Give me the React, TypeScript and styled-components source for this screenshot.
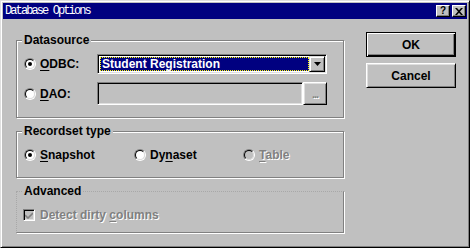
import React from 'react';
import styled, { createGlobalStyle } from 'styled-components';

const Global = createGlobalStyle`
  html, body { margin: 0; padding: 0; background: #c0c0c0; }
  * { box-sizing: border-box; }
`;

const Window = styled.div`
  width: 470px;
  height: 248px;
  background: #c0c0c0;
  border: 1px solid;
  border-color: #dfdfdf #000 #000 #dfdfdf;
  box-shadow: inset 1px 1px #fff, inset -1px -1px #808080;
  padding: 2px;
  display: flex;
  flex-direction: column;
  font-family: "Liberation Sans", Arial, sans-serif;
  font-size: 12px;
  font-weight: 700;
  color: #000;
`;

const TitleBar = styled.div`
  height: 16px;
  background: #000080;
  display: flex;
  align-items: center;
  padding: 0 1px 0 2px;
`;

const Title = styled.div`
  flex: 1;
  color: #fff;
  font-family: "Liberation Mono", "DejaVu Sans Mono", monospace;
  font-size: 12px;
  font-weight: 400;
  letter-spacing: -1.9px;
  line-height: 16px;
`;

const CaptionButton = styled.div<{ $gap?: boolean }>`
  width: 14px;
  height: 12px;
  margin-left: ${p => (p.$gap ? '2px' : '0')};
  background: #c0c0c0;
  border: 1px solid;
  border-color: #fff #000 #000 #fff;
  box-shadow: inset -1px -1px #808080;
  display: flex;
  align-items: center;
  justify-content: center;
  font-size: 10px;
  line-height: 10px;
  font-weight: 700;
  color: #000;
`;

const Body = styled.div`
  flex: 1;
  display: flex;
  padding: 13px 0 0 13px;
  gap: 22px;
`;

const Groups = styled.div`
  width: 328px;
  padding-top: 8px;
  display: flex;
  flex-direction: column;
  gap: 13px;
`;

const Group = styled.div<{ $h: number; $dim?: boolean }>`
  position: relative;
  height: ${p => p.$h}px;
  border: 1px solid #808080;
  box-shadow: ${p => (p.$dim ? '1px 1px #fff' : 'inset 1px 1px #fff, 1px 1px #fff')};
  ${p =>
    p.$dim &&
    `border-top: 1px dotted #a8a8a8; border-left: 1px dotted #a8a8a8;`}
`;

const Legend = styled.span`
  position: absolute;
  top: -8px;
  left: 5px;
  padding: 0 2px;
  line-height: 14px;
  background: #c0c0c0;
`;

const SourceRows = styled.div`
  display: flex;
  flex-direction: column;
  gap: 8px;
  padding: 13px 0 0 7px;
`;

const Row = styled.div`
  display: flex;
  align-items: center;
`;

const Option = styled.label<{ $w?: number; $disabled?: boolean }>`
  display: flex;
  align-items: center;
  gap: 4px;
  width: ${p => (p.$w ? `${p.$w}px` : 'auto')};
  color: ${p => (p.$disabled ? '#808080' : '#000')};
  text-shadow: ${p => (p.$disabled ? '1px 1px #fff' : 'none')};
`;

const Radio = styled.span`
  width: 12px;
  height: 12px;
  border-radius: 50%;
  border: 1px solid;
  border-color: #808080 #fff #fff #808080;
  display: flex;
  align-items: center;
  justify-content: center;
  flex-shrink: 0;
`;

const RadioInner = styled.span<{ $disabled?: boolean }>`
  width: 10px;
  height: 10px;
  border-radius: 50%;
  border: 1px solid;
  border-color: #000 #dfdfdf #dfdfdf #000;
  background: ${p => (p.$disabled ? '#c0c0c0' : '#fff')};
  display: flex;
  align-items: center;
  justify-content: center;
`;

const Dot = styled.span`
  width: 4px;
  height: 4px;
  border-radius: 50%;
  background: #000;
`;

const Key = styled.span`
  text-decoration: underline;
  text-underline-offset: 2px;
`;

const Sunken = styled.div<{ $w: number; $h: number; $bg: string }>`
  width: ${p => p.$w}px;
  height: ${p => p.$h}px;
  background: ${p => p.$bg};
  border: 1px solid;
  border-color: #808080 #fff #fff #808080;
  box-shadow: inset 1px 1px #000, inset -1px -1px #dfdfdf;
  padding: 2px;
  display: flex;
`;

const Selected = styled.div`
  flex: 1;
  background: #000080;
  border: 1px dotted #ffff00;
  color: #fff;
  line-height: 12px;
  padding-left: 1px;
`;

const DropButton = styled.div`
  width: 16px;
  margin: -1px -1px -1px 0;
  background: #c0c0c0;
  border: 1px solid;
  border-color: #dfdfdf #000 #000 #dfdfdf;
  box-shadow: inset 1px 1px #fff, inset -1px -1px #808080;
  display: flex;
  align-items: center;
  justify-content: center;
`;

const SmallButton = styled.div`
  width: 24px;
  height: 23px;
  background: #c0c0c0;
  border: 1px solid;
  border-color: #fff #000 #000 #fff;
  box-shadow: inset 1px 1px #dfdfdf, inset -1px -1px #808080;
  display: flex;
  align-items: center;
  justify-content: center;
  color: #808080;
  text-shadow: 1px 1px #fff;
  font-size: 11px;
  line-height: 12px;
  letter-spacing: -1px;
`;

const TypeRow = styled.div`
  display: flex;
  align-items: center;
  height: 45px;
  padding-left: 7px;
`;

const CheckRow = styled.div`
  display: flex;
  align-items: center;
  gap: 5px;
  padding: 16px 0 0 6px;
  color: #808080;
  text-shadow: 1px 1px #fff;
`;

const CheckBox = styled.span`
  width: 12px;
  height: 12px;
  border: 1px solid;
  border-color: #808080 #fff #fff #808080;
  box-shadow: inset 1px 1px #000, inset -1px -1px #dfdfdf;
  background: #c0c0c0;
  display: flex;
  align-items: center;
  justify-content: center;
  text-shadow: none;
`;

const Buttons = styled.div`
  width: 90px;
  display: flex;
  flex-direction: column;
  gap: 6px;
`;

const PushButton = styled.div<{ $default?: boolean }>`
  height: 25px;
  background: #c0c0c0;
  border: 1px solid;
  border-color: ${p => (p.$default ? '#000' : '#fff #000 #000 #fff')};
  box-shadow: ${p =>
    p.$default
      ? 'inset 1px 1px #fff, inset -1px -1px #000, inset -2px -2px #808080'
      : 'inset 1px 1px #dfdfdf, inset -1px -1px #808080'};
  display: flex;
  align-items: center;
  justify-content: center;
`;

function RadioOption(props: { label: React.ReactNode; checked?: boolean; disabled?: boolean; w?: number }) {
  return (
    <Option $w={props.w} $disabled={props.disabled}>
      <Radio>
        <RadioInner $disabled={props.disabled}>{props.checked && <Dot />}</RadioInner>
      </Radio>
      <span>{props.label}</span>
    </Option>
  );
}

export default function App() {
  return (
    <>
      <Global />
      <Window>
        <TitleBar>
          <Title>Database Options</Title>
          <CaptionButton>?</CaptionButton>
          <CaptionButton $gap>
            <svg width="8" height="7" viewBox="0 0 8 7">
              <path d="M0 0h2l2 2.3L6 0h2L5 3.5 8 7H6L4 4.7 2 7H0l3-3.5z" fill="#000" />
            </svg>
          </CaptionButton>
        </TitleBar>
        <Body>
          <Groups>
            <Group $h={78}>
              <Legend>Datasource</Legend>
              <SourceRows>
                <Row>
                  <RadioOption w={73} checked label={<><Key>O</Key>DBC:</>} />
                  <Sunken $w={230} $h={20} $bg="#fff">
                    <Selected>Student Registration</Selected>
                    <DropButton>
                      <svg width="7" height="4" viewBox="0 0 7 4">
                        <path d="M0 0h7L3.5 4z" fill="#000" />
                      </svg>
                    </DropButton>
                  </Sunken>
                </Row>
                <Row>
                  <RadioOption w={73} label={<><Key>D</Key>AO:</>} />
                  <Sunken $w={206} $h={23} $bg="#c0c0c0" />
                  <SmallButton>...</SmallButton>
                </Row>
              </SourceRows>
            </Group>
            <Group $h={47}>
              <Legend>Recordset type</Legend>
              <TypeRow>
                <RadioOption w={110} checked label={<><Key>S</Key>napshot</>} />
                <RadioOption w={109} label={<>Dy<Key>n</Key>aset</>} />
                <RadioOption disabled label={<><Key>T</Key>able</>} />
              </TypeRow>
            </Group>
            <Group $h={42} $dim>
              <Legend>Advanced</Legend>
              <CheckRow>
                <CheckBox>
                  <svg width="8" height="7" viewBox="0 0 8 7">
                    <path d="M0 3l3 3 5-5" stroke="#808080" strokeWidth="1.6" fill="none" />
                  </svg>
                </CheckBox>
                <span>Detect dirty <Key>c</Key>olumns</span>
              </CheckRow>
            </Group>
          </Groups>
          <Buttons>
            <PushButton $default>OK</PushButton>
            <PushButton>Cancel</PushButton>
          </Buttons>
        </Body>
      </Window>
    </>
  );
}
